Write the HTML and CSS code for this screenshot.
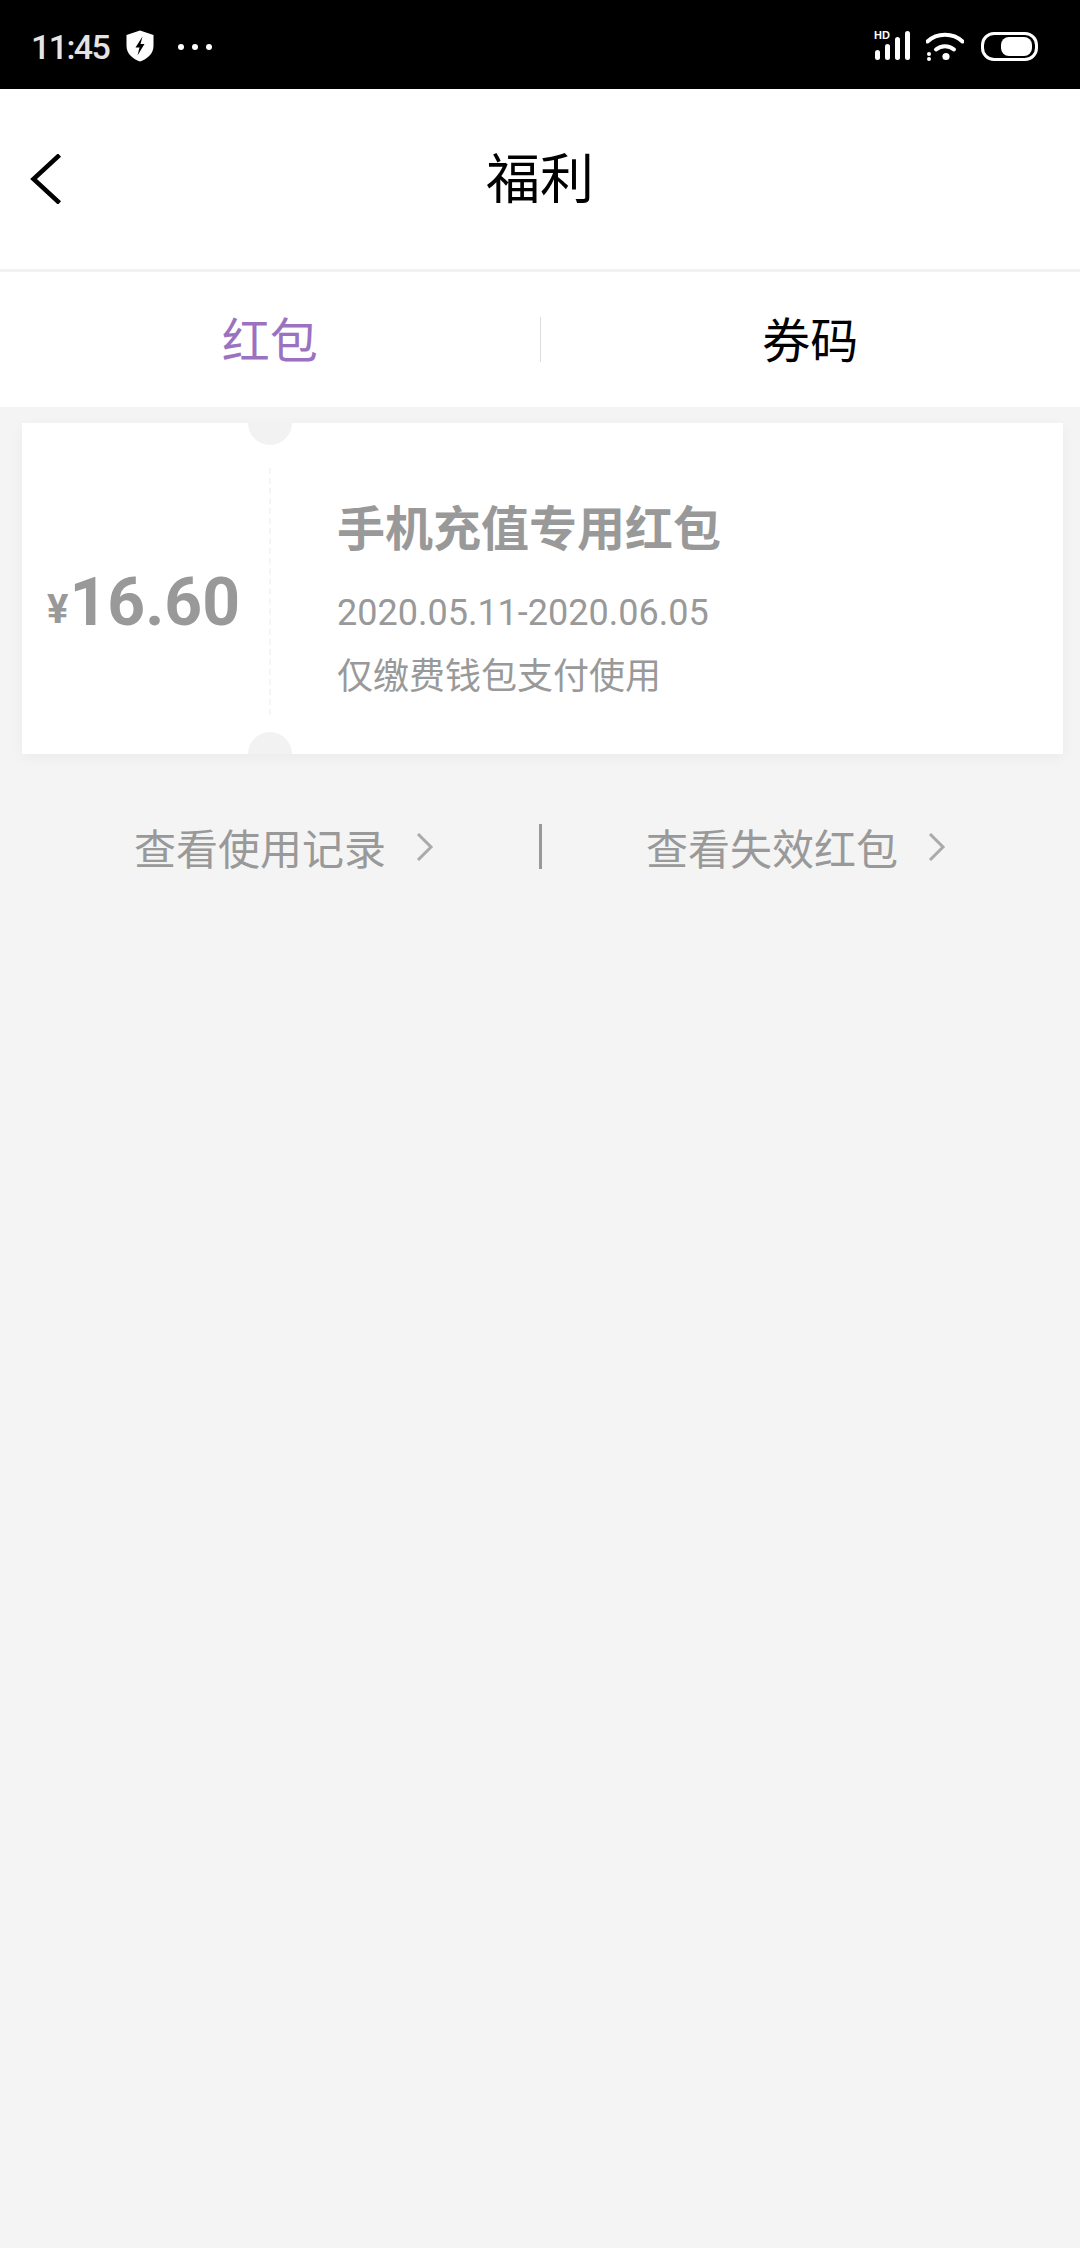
FILE: index.html
```html
<!DOCTYPE html>
<html lang="zh-CN">
<head>
<meta charset="UTF-8">
<meta name="viewport" content="width=device-width, initial-scale=1.0">
<title>福利</title>
<link rel="stylesheet" href="styles.css">
</head>
<body>
<div class="status-bar">
  <div class="status-left">
    <span class="clock">11:45</span>
    <svg class="shield" width="28" height="32" viewBox="0 0 28 32">
      <path d="M14 0.5 L27.5 5 V16 C27.5 24 21 29 14 31.5 C7 29 0.5 24 0.5 16 V5 Z" fill="#fff"/>
      <path d="M16.5 6.5 L9.5 17.5 H13.5 L11.5 25.5 L18.5 14 H14.5 Z" fill="#000"/>
    </svg>
    <div class="dots"><i></i><i></i><i></i></div>
  </div>
  <div class="status-right">
    <svg class="signal" width="38" height="32" viewBox="0 0 38 32">
      <text x="0" y="8.5" class="hd">HD</text>
      <rect x="1" y="20" width="5" height="10" rx="2.5" fill="#fff"/>
      <rect x="11" y="14" width="5" height="16" rx="2.5" fill="#fff"/>
      <rect x="21" y="7" width="5" height="23" rx="2.5" fill="#fff"/>
      <rect x="31" y="1" width="5" height="29" rx="2.5" fill="#fff"/>
    </svg>
    <svg class="wifi" width="38" height="30" viewBox="0 0 38 30">
      <path d="M1.5 10.5 C11 1.5 27 1.5 36.5 10.5" fill="none" stroke="#fff" stroke-width="4" stroke-linecap="round"/>
      <path d="M10 18.5 C15 14 23 14 28 18.5" fill="none" stroke="#fff" stroke-width="4" stroke-linecap="round"/>
      <circle cx="20" cy="25.5" r="3.6" fill="#fff"/>
      <circle cx="3" cy="23" r="2" fill="#fff"/>
      <circle cx="3" cy="28" r="2" fill="#fff"/>
    </svg>
    <div class="battery"><div class="battery-level"></div></div>
  </div>
</div>

<div class="nav-bar">
  <svg class="back" width="32" height="50" viewBox="0 0 32 50">
    <path d="M29.5 1 L3.5 25 L29.5 49" fill="none" stroke="#000" stroke-width="4.5"/>
  </svg>
  <div class="nav-title">福利</div>
</div>

<div class="tabs">
  <div class="tab active">红包</div>
  <div class="tab">券码</div>
</div>

<div class="ticket">
  <div class="notch notch-top"></div>
  <div class="notch notch-bottom"></div>
  <div class="ticket-amount"><span class="currency">¥</span>16.60</div>
  <div class="ticket-info">
    <div class="ticket-name">手机充值专用红包</div>
    <div class="ticket-date">2020.05.11-2020.06.05</div>
    <div class="ticket-rule">仅缴费钱包支付使用</div>
  </div>
</div>

<div class="links">
  <div class="link link-used">查看使用记录
    <svg width="18" height="30" viewBox="0 0 18 30"><path d="M2 2 L15 15 L2 28" fill="none" stroke="#aaa" stroke-width="3"/></svg>
  </div>
  <div class="link link-expired">查看失效红包
    <svg width="18" height="30" viewBox="0 0 18 30"><path d="M2 2 L15 15 L2 28" fill="none" stroke="#aaa" stroke-width="3"/></svg>
  </div>
</div>
</body>
</html>
```

FILE: styles.css
```css
body {
  margin: 0;
  height: 2248px;
  overflow: hidden;
  background-color: #f4f4f4;
  font-family: "Noto Sans CJK SC", Roboto, sans-serif;
}

/* status bar */
.status-bar {
  height: 89px;
  background-color: #000;
  display: flex;
  justify-content: space-between;
  align-items: center;
  padding: 0 42px 0 31px;
}
.status-left, .status-right {
  display: flex;
  align-items: center;
}
.status-left {
  padding-top: 4px;
}
.clock {
  font-family: Roboto, sans-serif;
  font-weight: 500;
  font-size: 34px;
  letter-spacing: -1.6px;
  color: #e4e4e4;
}
.shield {
  margin-left: 17px;
  margin-bottom: 1px;
}
.dots {
  display: flex;
  gap: 8px;
  margin-left: 24px;
}
.dots i {
  width: 6px;
  height: 6px;
  border-radius: 50%;
  background-color: #fff;
}
.signal {
  margin-top: 3px;
}
.hd {
  font-family: "Liberation Sans", sans-serif;
  font-weight: bold;
  font-size: 11px;
  fill: #fff;
}
.wifi {
  margin-left: 14px;
  margin-top: 3px;
}
.battery {
  width: 57px;
  height: 29px;
  box-sizing: border-box;
  margin-left: 17px;
  margin-top: 3px;
  padding: 2px 3px 2px 0;
  border: 3px solid #fff;
  border-radius: 13px;
  display: flex;
  justify-content: flex-end;
}
.battery-level {
  width: 31px;
  background-color: #fff;
  border-radius: 8px;
}

/* nav */
.nav-bar {
  height: 180px;
  background-color: #fff;
  border-bottom: 3px solid #f2f2f2;
  display: flex;
  align-items: center;
  justify-content: center;
  position: relative;
}
.back {
  position: absolute;
  left: 30px;
  top: 65px;
}
.nav-title {
  font-size: 54px;
  color: #000;
  line-height: 1;
  margin-bottom: 6px;
}

.tabs {
  height: 135px;
  background-color: #fff;
  display: flex;
  align-items: center;
}
.tab {
  flex: 1;
  height: 45px;
  line-height: 41px;
  text-align: center;
  font-size: 48px;
  color: #000;
}
.tab.active {
  color: #9b72c0;
  border-right: 1px solid #ddd;
  box-sizing: border-box;
}

/* ticket card */
.ticket {
  margin: 16px 17px 0 22px;
  height: 331px;
  background-color: #fff;
  box-shadow: 0 4px 14px rgba(0, 0, 0, 0.04);
  display: flex;
  position: relative;
  overflow: hidden;
}
.notch {
  position: absolute;
  left: 226px;
  width: 44px;
  height: 44px;
  border-radius: 50%;
  background-color: #f2f2f2;
}
.notch-top {
  top: -22px;
}
.notch-bottom {
  bottom: -22px;
}
.ticket-amount {
  width: 249px;
  height: 247px;
  margin-top: 45px;
  box-sizing: border-box;
  padding: 22px 0 0 25px;
  border-right: 2px dashed #f5f5f5;
  display: flex;
  align-items: center;
  font-family: Roboto, sans-serif;
  font-weight: 700;
  font-size: 66px;
  color: #999;
  line-height: 1;
}
.currency {
  font-size: 40px;
  margin-top: 14px;
  margin-right: 1px;
}
.ticket-info {
  padding: 0 0 0 66px;
  color: #999;
}
.ticket-name {
  margin-top: 70px;
  font-size: 48px;
  font-weight: 700;
  line-height: 64px;
}
.ticket-date {
  margin-top: 32px;
  font-family: Roboto, sans-serif;
  font-size: 36px;
  line-height: 48px;
}
.ticket-rule {
  margin-top: 12px;
  font-size: 36px;
  line-height: 48px;
}

/* bottom links */
.links {
  margin-top: 70px;
  display: flex;
  align-items: center;
}
.link {
  flex: 1;
  box-sizing: border-box;
  height: 45px;
  display: flex;
  align-items: center;
  gap: 30px;
  font-size: 42px;
  color: #999;
  white-space: nowrap;
}
.link-used {
  justify-content: flex-end;
  padding-right: 105px;
  border-right: 3px solid #999;
}
.link-expired {
  padding-left: 104px;
}
```
